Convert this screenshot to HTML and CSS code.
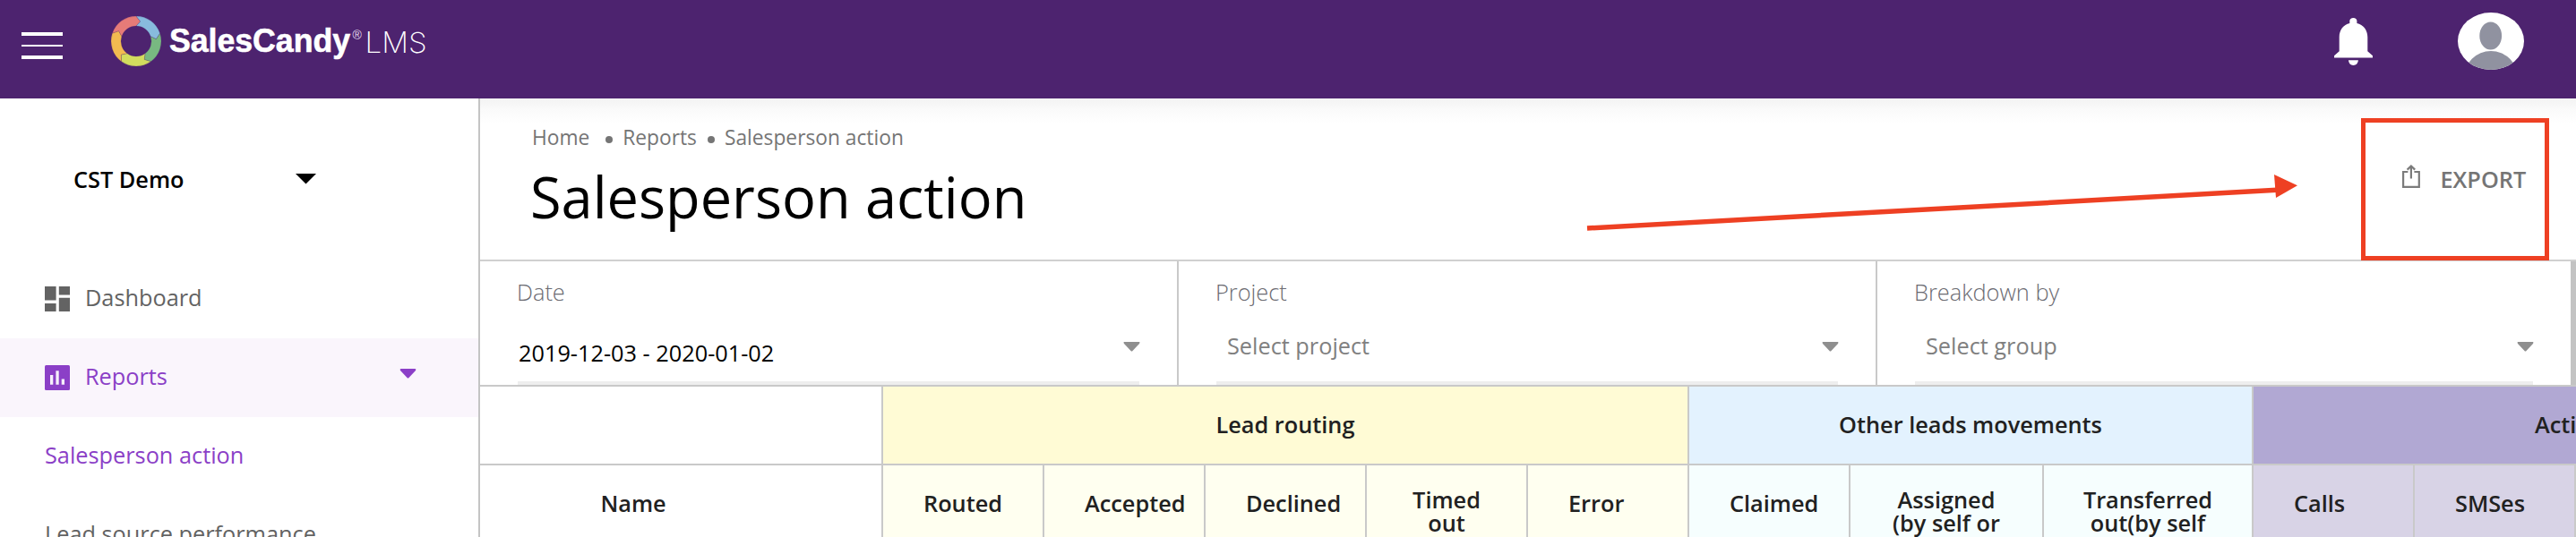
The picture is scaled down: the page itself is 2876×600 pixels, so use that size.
FILE: index.html
```
<!DOCTYPE html>
<html lang="en">
<head>
<meta charset="utf-8">
<title>Salesperson action</title>
<link rel="stylesheet" href="styles.css">
</head>
<body>
<header class="topbar">
  <div class="menu"><span class="menu-bar"></span><span class="menu-bar thin"></span><span class="menu-bar"></span></div>
  <svg class="logo" width="360" height="60" viewBox="0 0 360 60">
    <g stroke="#4d236f" stroke-opacity=".35" stroke-width=".6">
      <path fill="#e67b78" d="M1.37 19.35A28 28 0 0 1 28 0L32.68 5.99L28 11A17 17 0 0 0 11.83 22.75L8.51 16.75Z"/>
      <path fill="#88bbdd" d="M28 0A28 28 0 0 1 54.63 19.35L50.38 25.65L44.17 22.75A17 17 0 0 0 28 11L32.68 5.99Z"/>
      <path fill="#78b981" d="M54.63 19.35A28 28 0 0 1 44.46 50.65L37.15 48.55L37.99 41.75A17 17 0 0 0 44.17 22.75L50.38 25.65Z"/>
      <path fill="#d2dc5e" d="M44.46 50.65A28 28 0 0 1 11.54 50.65L11.28 43.06L18.01 41.75A17 17 0 0 0 37.99 41.75L37.15 48.55Z"/>
      <path fill="#f2bb50" d="M11.54 50.65A28 28 0 0 1 1.37 19.35L8.51 16.75L11.83 22.75A17 17 0 0 0 18.01 41.75L11.28 43.06Z"/>
    </g>
    <text class="brand" x="65" y="40.3" textLength="202" lengthAdjust="spacingAndGlyphs">SalesCandy</text>
    <text class="reg" x="269.6" y="26.2">®</text>
    <text class="lms" x="283.5" y="41" textLength="69" lengthAdjust="spacingAndGlyphs">LMS</text>
  </svg>
  <div class="top-actions">
    <svg width="43" height="53" viewBox="0 0 43 53" fill="#fff">
      <path d="M17.3 6V3.6C17.3 1.4 19 0 21.4 0S25.4 1.4 25.4 3.6V6C32.5 7.6 37.3 13.5 37.3 21.5V37.2L43 42.2V44.4H0V42.2L5.7 37.2V21.5C5.7 13.5 10.3 7.6 17.3 6Z"/>
      <path d="M16 47.3H26.9C26.6 50.8 24.5 53 21.4 53S16.3 50.8 16 47.3Z"/>
    </svg>
    <svg width="74" height="64" viewBox="0 0 74 64">
      <defs><clipPath id="avatar"><ellipse cx="37" cy="32" rx="37" ry="32"/></clipPath></defs>
      <g clip-path="url(#avatar)">
        <rect width="74" height="64" fill="#fff"/>
        <ellipse cx="36.7" cy="26" rx="12.4" ry="15.5" fill="#9092a0"/>
        <ellipse cx="37" cy="73" rx="30" ry="30" fill="#9092a0"/>
      </g>
    </svg>
  </div>
</header>
<div class="layout">
  <nav class="sidebar">
    <div class="account"><span>CST Demo</span>
      <svg width="24" height="12" viewBox="0 0 24 12"><path d="M0 0H23L11.5 11.6Z"/></svg>
    </div>
    <div class="nav-item">
      <svg width="28" height="28" viewBox="0 0 28 28" fill="#636363"><path d="M0 0H12.6V15.4H0ZM0 19H12.6V28H0ZM15.8 0H28V9.6H15.8ZM15.8 12.8H28V28H15.8Z"/></svg>
      <span>Dashboard</span>
    </div>
    <div class="nav-item active">
      <svg width="28" height="28" viewBox="0 0 28 28"><rect width="28" height="28" rx="1.5" fill="#8b3fc7"/><path fill="#f6effb" d="M6 11H9.3V21.8H6ZM12.4 6.2H15.7V21.8H12.4ZM18.7 15.5H22V21.8H18.7Z"/></svg>
      <span>Reports</span>
      <svg class="nav-caret" width="19" height="11" viewBox="0 0 19 11" fill="#8b3fc7"><path d="M1.5 0H17.5Q19 .6 18 2L10.5 10Q9.5 11 8.5 10L1 2Q0 .6 1.5 0Z"/></svg>
    </div>
    <div class="nav-item current"><span>Salesperson action</span></div>
    <div class="nav-item"><span>Lead source performance</span></div>
  </nav>
  <main class="main">
    <div class="page-head">
      <div>
        <div class="crumbs"><span>Home</span><i class="dot first"></i><span>Reports</span><i class="dot"></i><span>Salesperson action</span></div>
        <h1 class="title">Salesperson action</h1>
      </div>
      <div class="export">
        <svg width="20" height="27" viewBox="0 0 20 27" fill="none" stroke="#7b7b7b" stroke-width="2.2"><path d="M6.4 8H1.1V24.9H18.8V8H13.4M9.9 15.5V2.5M5.6 5.6L9.9 1.5L14.2 5.6"/></svg>
        <span>EXPORT</span>
      </div>
    </div>
    <div class="filters">
      <div class="filter">
        <div class="label">Date</div>
        <div class="field date"><span>2019-12-03 - 2020-01-02</span><svg class="caret" width="19" height="11" viewBox="0 0 19 11"><path d="M1 0H18Q19 .6 18 2L10.5 10Q9.5 11 8.5 10L1 2Q0 .6 1 0Z"/></svg></div>
      </div>
      <div class="filter">
        <div class="label">Project</div>
        <div class="field"><span>Select project</span><svg class="caret" width="19" height="11" viewBox="0 0 19 11"><path d="M1 0H18Q19 .6 18 2L10.5 10Q9.5 11 8.5 10L1 2Q0 .6 1 0Z"/></svg></div>
      </div>
      <div class="filter last">
        <div class="label">Breakdown by</div>
        <div class="field"><span>Select group</span><svg class="caret" width="19" height="11" viewBox="0 0 19 11"><path d="M1 0H18Q19 .6 18 2L10.5 10Q9.5 11 8.5 10L1 2Q0 .6 1 0Z"/></svg></div>
      </div>
    </div>
    <div class="grid">
      <div class="group"></div>
      <div class="group routing">Lead routing</div>
      <div class="group moves">Other leads movements</div>
      <div class="group actions">Actions</div>
      <div class="col name">Name</div>
      <div class="col r">Routed</div>
      <div class="col r">Accepted</div>
      <div class="col r">Declined</div>
      <div class="col r two">Timed<br>out</div>
      <div class="col r">Error</div>
      <div class="col m">Claimed</div>
      <div class="col m two">Assigned<br>(by self or</div>
      <div class="col m two">Transferred<br>out(by self</div>
      <div class="col a">Calls</div>
      <div class="col a">SMSes</div>
      <div class="col a"></div>
    </div>
  </main>
</div>
<div class="callout"></div>
<svg class="arrow" width="800" height="70" viewBox="0 0 800 70"><path d="M2 65L772 22.3" stroke="#ee4023" stroke-width="5.5"/><path d="M769 5L795 17.2L771 31Z" fill="#ee4023"/></svg>
</body>
</html>
```
FILE: styles.css
```
* { box-sizing: border-box; }
body {
  margin: 0;
  width: 2876px;
  height: 600px;
  overflow: hidden;
  position: relative;
  background: #fff;
  color: #000;
  font: 400 25.3px/26px "Open Sans", "Noto Sans", sans-serif;
}
svg { display: block; flex: none; }

.topbar {
  height: 110px;
  background: #4d236f;
  display: flex;
  align-items: flex-start;
}
.menu {
  width: 46px;
  margin: 36px 54px 0 24px;
  display: flex;
  flex-direction: column;
  gap: 10px;
}
.menu-bar { height: 4px; background: #fff; }
.menu-bar.thin { height: 2px; }
.logo { margin-top: 18px; overflow: visible; }
.brand { font: 700 36.5px "Liberation Sans", sans-serif; fill: #fff; stroke: #fff; stroke-width: .6px; }
.reg { font: 400 14px "Liberation Sans", sans-serif; fill: #e6def0; }
.lms { font: 200 32px Inter, "Liberation Sans", sans-serif; fill: #fff; }
.top-actions {
  margin: 14px 58px 0 auto;
  display: flex;
  gap: 95px;
  align-items: flex-start;
}
.top-actions svg:first-child { margin-top: 6px; }

.layout { display: flex; height: 490px; }
.sidebar { width: 536px; border-right: 2px solid #c4c4c4; overflow: hidden; flex: none; }
.account {
  height: 180px;
  padding: 77px 0 0 82px;
  display: flex;
  font-weight: 600;
}
.account span { width: 248px; }
.account svg { margin-top: 7px; }
.nav-item {
  height: 88px;
  padding: 0 69px 0 50px;
  display: flex;
  align-items: center;
  color: #636363;
}
.nav-item span { padding-bottom: 4px; white-space: nowrap; }
.nav-item svg + span { margin-left: 17px; }
.nav-item.active { background: #faf5fc; color: #8b3fc7; }
.nav-item.current { color: #8b3fc7; }
.nav-caret { margin: 0 0 10px auto; }

.main {
  width: 2340px;
  overflow: hidden;
  display: flex;
  flex-direction: column;
}
.page-head {
  height: 182px;
  border-bottom: 2px solid #d0d0d0;
  display: flex;
  justify-content: space-between;
  padding-left: 58px;
  flex: none;
  background: linear-gradient(#f3f3f3, #fafafa 12px, #fff 28px);
}
.crumbs {
  margin-top: 31px;
  display: flex;
  align-items: center;
  color: #757575;
  font-size: 22.75px;
}
.dot { width: 8px; height: 8px; border-radius: 50%; background: #757575; margin: 3px 10.5px 0 12.5px; }
.dot.first { margin: 3px 11px 0 18px; }
.title { margin: 18px 0 0 -2px; font-weight: 400; font-size: 63.1px; line-height: 70px; white-space: nowrap; }
.export { display: flex; width: 194px; padding-top: 77px; color: #757575; font-weight: 600; }
.export svg { margin-top: -3px; }
.export span { margin-left: 22.5px; }

.filters { display: flex; height: 138px; background: #c3c3c3; flex: none; }
.filter {
  width: 780px;
  padding: 21px 42px 0;
  border-right: 2px solid #c9c9c9;
  background: #fff;
  display: flex;
  flex-direction: column;
}
.filter.last { width: 774px; border-right: 0; }
.label { color: #6b6b72; font-weight: 300; font-size: 25.4px; margin-left: -1px; }
.field {
  height: 91px;
  border-bottom: 4px solid #eee;
  padding: 34px 0 0 12px;
  display: flex;
  justify-content: space-between;
  color: #808080;
}
.field.date { padding: 42px 0 0 1px; color: #000; }
.caret { fill: #8f8f8f; margin: 9px -1px 0 0; }
.date .caret { margin-top: 1px; }

.grid {
  display: grid;
  width: 2520px;
  grid-template-columns: 450px repeat(6, 180px) 216px 234px 180px 180px 180px;
  grid-template-rows: 88px 90px;
  border-top: 2px solid #c9c9c9;
  color: #212121;
  font-weight: 600;
  line-height: 26px;
}
.group {
  border-right: 2px solid #c9c9c9;
  border-bottom: 2px solid #c9c9c9;
  padding-bottom: 2px;
  display: flex;
  align-items: center;
  justify-content: center;
}
.routing { grid-column: span 5; background: #fffbd5; }
.moves { grid-column: span 3; background: #e3f2fe; }
.actions { grid-column: span 3; background: #b1a8d3; justify-content: flex-start; padding-left: 314px; }
.col { border-right: 2px solid #c9c9c9; padding: 29px 0 0 45px; }
.name { padding-left: 134.5px; }
.two { padding: 25px 0 0; text-align: center; }
.r { background: #fffff0; }
.m { background: #f6fefe; }
.a { background: #d8d3e6; }

.callout {
  position: absolute;
  left: 2636px;
  top: 132px;
  width: 210px;
  height: 159px;
  border: 5px solid #ee4023;
}
.arrow { position: absolute; left: 1770px; top: 190px; }
```
